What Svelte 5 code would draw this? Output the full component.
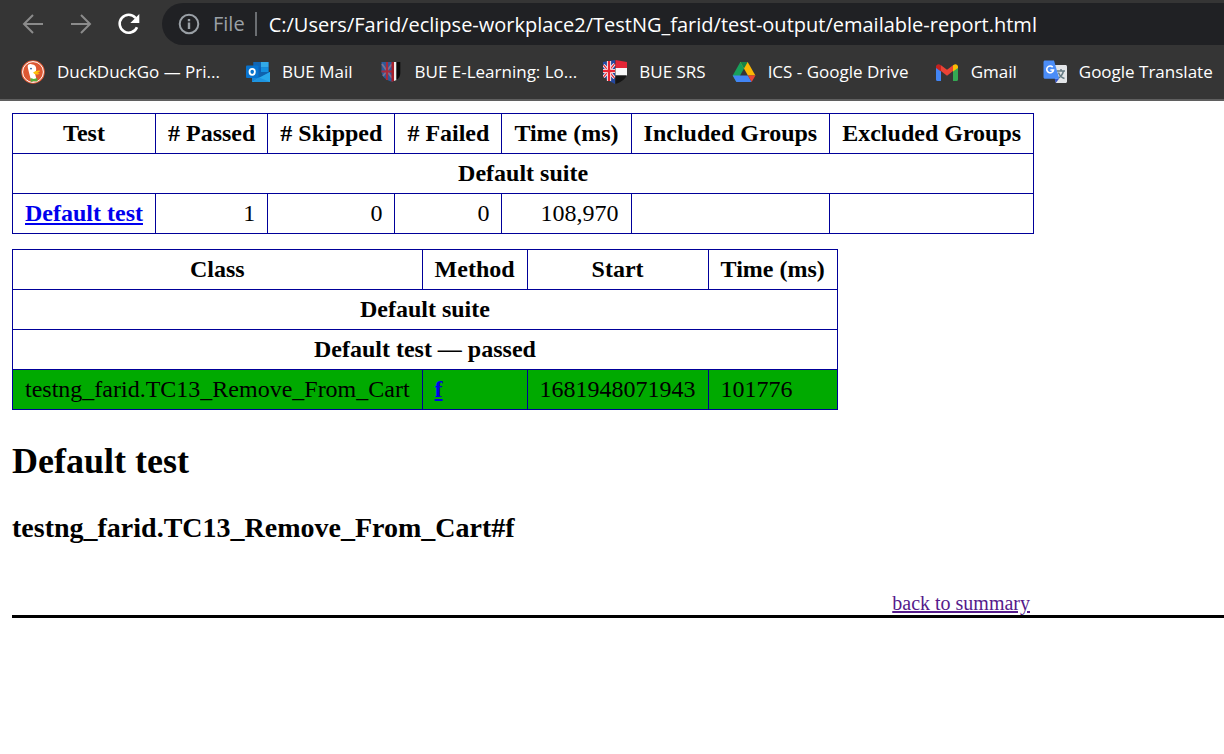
<script>
  const bookmarks = [
    { icon: 'duck', label: 'DuckDuckGo — Pri...' },
    { icon: 'outlook', label: 'BUE Mail' },
    { icon: 'shield', label: 'BUE E-Learning: Lo...' },
    { icon: 'srs', label: 'BUE SRS' },
    { icon: 'drive', label: 'ICS - Google Drive' },
    { icon: 'gmail', label: 'Gmail' },
    { icon: 'translate', label: 'Google Translate' }
  ];
  const summaryHeads = ['Test', '# Passed', '# Skipped', '# Failed', 'Time (ms)', 'Included Groups', 'Excluded Groups'];
  const summaryValues = ['1', '0', '0', '108,970', '', ''];
  const methodHeads = ['Class', 'Method', 'Start', 'Time (ms)'];
</script>

<header class="browser">
  <div class="toolbar">
    <button class="nav" aria-label="Back">
      <svg viewBox="0 0 24 24" fill="none" stroke="#8b8b8b" stroke-width="2"><path d="M22 12H3M12 3 3 12l9 9" /></svg>
    </button>
    <button class="nav" aria-label="Forward">
      <svg viewBox="0 0 24 24" fill="none" stroke="#8b8b8b" stroke-width="2"><path d="M2 12h19M12 3l9 9-9 9" /></svg>
    </button>
    <button class="nav" aria-label="Reload">
      <svg viewBox="0 0 24 24"><path d="M20 15.2A9 9 0 1 1 18.6 6" fill="none" stroke="#fff" stroke-width="2.6" /><path d="M22.3 2v9h-9z" fill="#fff" /></svg>
    </button>
    <div class="omnibox">
      <svg viewBox="0 0 24 24" fill="none" stroke="#9aa0a6" stroke-width="2"><circle cx="12" cy="12" r="9.3" /><path d="M12 10.600V17M12 7v2.200" stroke-width="2.400" /></svg>
      <span class="scheme">File</span>
      <input aria-label="Address" value="C:/Users/Farid/eclipse-workplace2/TestNG_farid/test-output/emailable-report.html" />
    </div>
  </div>
  <nav class="bookmarks" aria-label="Bookmarks">
    {#each bookmarks as b}
      <a href="#top">
        <svg viewBox="0 0 24 24" aria-hidden="true">
          {#if b.icon === 'duck'}
            <circle cx="12" cy="12" r="11.8" fill="#de5833" />
            <circle cx="12" cy="12" r="10.4" fill="none" stroke="#fff" stroke-width="1" />
            <path d="M6.800 7.200C6.200 4.800 8 3.800 10.500 4.200c3.400.2 4.700 2.200 4.700 5 0 2-1.200 3-1 5l1.600 6.400c-2 .9-3.600 1-5.400.5C9.600 18 7.400 11 6.800 7.200Z" fill="#fff" />
            <path d="M12.200 12.200c2-.6 4-2 6.800-1.500-.4 1.400-2.200 1.800-3 2.200 1.100.2 2 .1 2.700.3-1.200 1.900-5.900 1.600-6.500-1Z" fill="#fdc20a" />
            <path d="m9.500 17.900 3.300 1.100 3.500-1v3.600l-3.400-.6-3.100.9Z" fill="#55ae3c" />
            <circle cx="10" cy="8.600" r=".9" fill="#2d4f8e" />
          {:else if b.icon === 'outlook'}
            <path d="M7.500 2h15v12h-15z" fill="#0c5eb8" />
            <path d="M7.500 2h7.500v5.500H7.500z" fill="#1066b5" /><path d="M15 2h7.500v5.500H15z" fill="#32a9e7" /><path d="M15 7.500h7.500V14H15z" fill="#1490df" />
            <path d="M6 12h18v10H6z" fill="#1784d8" /><path d="m24 12-10.500 6L6 14v-2z" fill="#0f62ad" />
            <path d="M24 12v10H6l7.500-4.500z" fill="#28a8ea" /><path d="M13 17.500 24 22H7z" fill="#1e94e0" />
            <rect y="5.500" width="12.500" height="12.500" rx="1" fill="#0873ce" />
            <ellipse cx="6.200" cy="11.800" rx="2.700" ry="3" fill="none" stroke="#fff" stroke-width="1.800" />
          {:else if b.icon === 'shield'}
            <path d="M2.500 2H14v20C6 20 2.500 16 2.500 11Z" fill="#2b5b9b" />
            <path d="M3 4l10 14M13 4 4 16" stroke="#7f7190" stroke-width="1.800" /><path d="M8 2v18M2.500 11.500H14" stroke="#a82a3c" stroke-width="2.200" />
            <path d="M12.500 2H15v19l-2.500 1z" fill="#a51c26" /><path d="M15 2h2.500v18L15 21z" fill="#eee" /><path d="M17.500 2h3.800v11c0 3-1.300 5-3.800 7z" fill="#080808" />
          {:else if b.icon === 'srs'}
            <path d="M0 2 12 0v24C4 20 0 17 0 12Z" fill="#24489e" />
            <path d="m.5 5 11 13M11.500 4 .5 17" stroke="#fff" stroke-width="3" /><path d="m.5 5 11 13M11.500 4 .5 17" stroke="#e22b38" stroke-width="1.200" />
            <path d="M6 1v20M0 11h12" stroke="#fff" stroke-width="4.200" /><path d="M6 1v20M0 11h12" stroke="#e72532" stroke-width="2.400" />
            <path d="M12.500 0 24 2v6H12.500z" fill="#e32636" /><path d="M12.500 8H24v7.500H12.500z" fill="#f7f7f7" /><path d="M12.500 15.500H23.500c-1.500 4-5.500 6.500-11 8.500z" fill="#151515" />
          {:else if b.icon === 'drive'}
            <path d="M8.300 2h7.400L4.400 22 .7 15.500Z" fill="#18a05b" />
            <path d="M8.300 2h7.400l7.700 13.500h-7.500Z" fill="#fbb804" /><path d="M8.300 2h7.400L12 8.500Z" fill="#168347" />
            <path d="M.7 15.500h15.200L19.700 22H4.400Z" fill="#4285f4" /><path d="M15.900 15.500h7.500L19.700 22Z" fill="#ea4335" />
          {:else if b.icon === 'gmail'}
            <path d="M1 6.500v13.300c0 .7.500 1.200 1.200 1.200H6V10z" fill="#4285f4" /><path d="M23 6.500v13.300c0 .7-.5 1.200-1.200 1.200H18V10z" fill="#34a853" />
            <path d="M6 11V5.300l6 4.500 6-4.500V11l-6 4.700z" fill="#ea4335" />
            <path d="M1 6.800C1 4 4 3.500 5.500 4.900L6 5.300V11.500L1 8z" fill="#c5221f" /><path d="M23 6.800c0-2.800-3-3.300-4.500-1.900l-.5.400v6.200l5-3.500z" fill="#fbbc04" />
          {:else}
            <path d="M9 5h13.500c.8 0 1.500.7 1.500 1.500v15c0 .8-.7 1.500-1.500 1.500H13z" fill="#e3e5e8" />
            <path d="M14 11h8M18 9v2m2.500 0c-.8 3.500-2.800 6-6 7.500m1-6c1 3 3 5 6 6" fill="none" stroke="#657b84" stroke-width="1.500" />
            <path d="m11.500 18.500 4.500.2L12.800 23z" fill="#3555c8" />
            <path d="M2 .5h9L16.300 18.700H2C1.200 18.700.5 18 .5 17.200V2C.5 1.200 1.200.5 2 .5Z" fill="#4b8df8" />
            <path d="M9.700 7.100A3.400 3.400 0 1 0 10.500 10H7.400" fill="none" stroke="#fff" stroke-width="1.600" />
          {/if}
        </svg>
        <span>{b.label}</span>
      </a>
    {/each}
  </nav>
</header>

<main id="top">
  <table>
    <thead>
      <tr>{#each summaryHeads as h}<th scope="col">{h}</th>{/each}</tr>
      <tr><th colspan="7">Default suite</th></tr>
    </thead>
    <tbody>
      <tr>
        <th scope="row"><a href="#t0">Default test</a></th>
        {#each summaryValues as v}<td class="num">{v}</td>{/each}
      </tr>
    </tbody>
  </table>

  <table>
    <thead>
      <tr>{#each methodHeads as h}<th scope="col">{h}</th>{/each}</tr>
      <tr><th colspan="4">Default suite</th></tr>
    </thead>
    <tbody id="t0">
      <tr><th colspan="4">Default test — passed</th></tr>
      <tr class="passed">
        <td>testng_farid.TC13_Remove_From_Cart</td>
        <td><a href="#m0">f</a></td>
        <td>1681948071943</td>
        <td>101776</td>
      </tr>
    </tbody>
  </table>

  <h2>Default test</h2>
  <h3 id="m0">testng_farid.TC13_Remove_From_Cart#f</h3>
  <p class="totop"><a href="#top">back to summary</a></p>
</main>

<style>
  :global(body) {
    margin: 0;
    background: #fff;
    overflow-x: hidden;
  }
  .browser {
    background: #353535;
    border-bottom: 2px solid #5f5f5f;
    font-family: "Open Sans", "Noto Sans", sans-serif;
    color: #fff;
    overflow: hidden;
  }
  .toolbar {
    display: flex;
    align-items: center;
    gap: 24px;
    padding: 3px 0 0 21px;
  }
  .nav {
    width: 24px;
    height: 24px;
    padding: 0;
    border: 0;
    background: none;
  }
  svg {
    display: block;
    flex: none;
    width: 24px;
    height: 24px;
  }
  .omnibox {
    flex: 1;
    min-width: 0;
    height: 42px;
    box-sizing: border-box;
    display: flex;
    align-items: center;
    gap: 12px;
    padding-left: 15px;
    margin-left: -3px;
    border-radius: 21px 0 0 21px;
    background: #202124;
    font-size: 20px;
  }
  .scheme {
    color: #9aa0a6;
    padding-right: 10px;
    border-right: 2px solid #6b6e72;
    line-height: 24px;
  }
  input {
    flex: 1;
    min-width: 0;
    padding: 0;
    border: 0;
    outline: 0;
    background: none;
    color: #fff;
    font: inherit;
  }
  .bookmarks {
    display: flex;
    gap: 26px;
    height: 54px;
    padding-left: 21px;
    box-sizing: border-box;
    align-items: center;
  }
  .bookmarks a {
    display: flex;
    flex: none;
    align-items: center;
    gap: 12px;
    color: #fff;
    font-size: 17px;
    line-height: 24px;
    text-decoration: none;
    white-space: nowrap;
  }
  main {
    padding: 12px 0 0 12px;
    font-family: "Liberation Serif", "Times New Roman", serif;
    font-size: 24px;
    line-height: 27px;
    color: #000;
  }
  table {
    border-collapse: collapse;
    margin-bottom: 15px;
  }
  th,
  td {
    border: 1px solid #009;
    padding: 6px 12px;
    white-space: nowrap;
  }
  .num {
    text-align: right;
  }
  main a {
    color: #00e;
    font-weight: bold;
  }
  .passed td {
    background: #0a0;
  }
  h2 {
    margin: 30px 0;
    font-size: 36px;
    line-height: 42px;
  }
  h3 {
    margin: 30px 0 48px;
    font-size: 28px;
    line-height: 32px;
  }
  .totop {
    margin: 0;
    padding-right: 194px;
    border-bottom: 3px solid #000;
    font-size: 20px;
    line-height: 23px;
    text-align: right;
  }
  .totop a {
    color: #551a8b;
    font-weight: normal;
  }
</style>
